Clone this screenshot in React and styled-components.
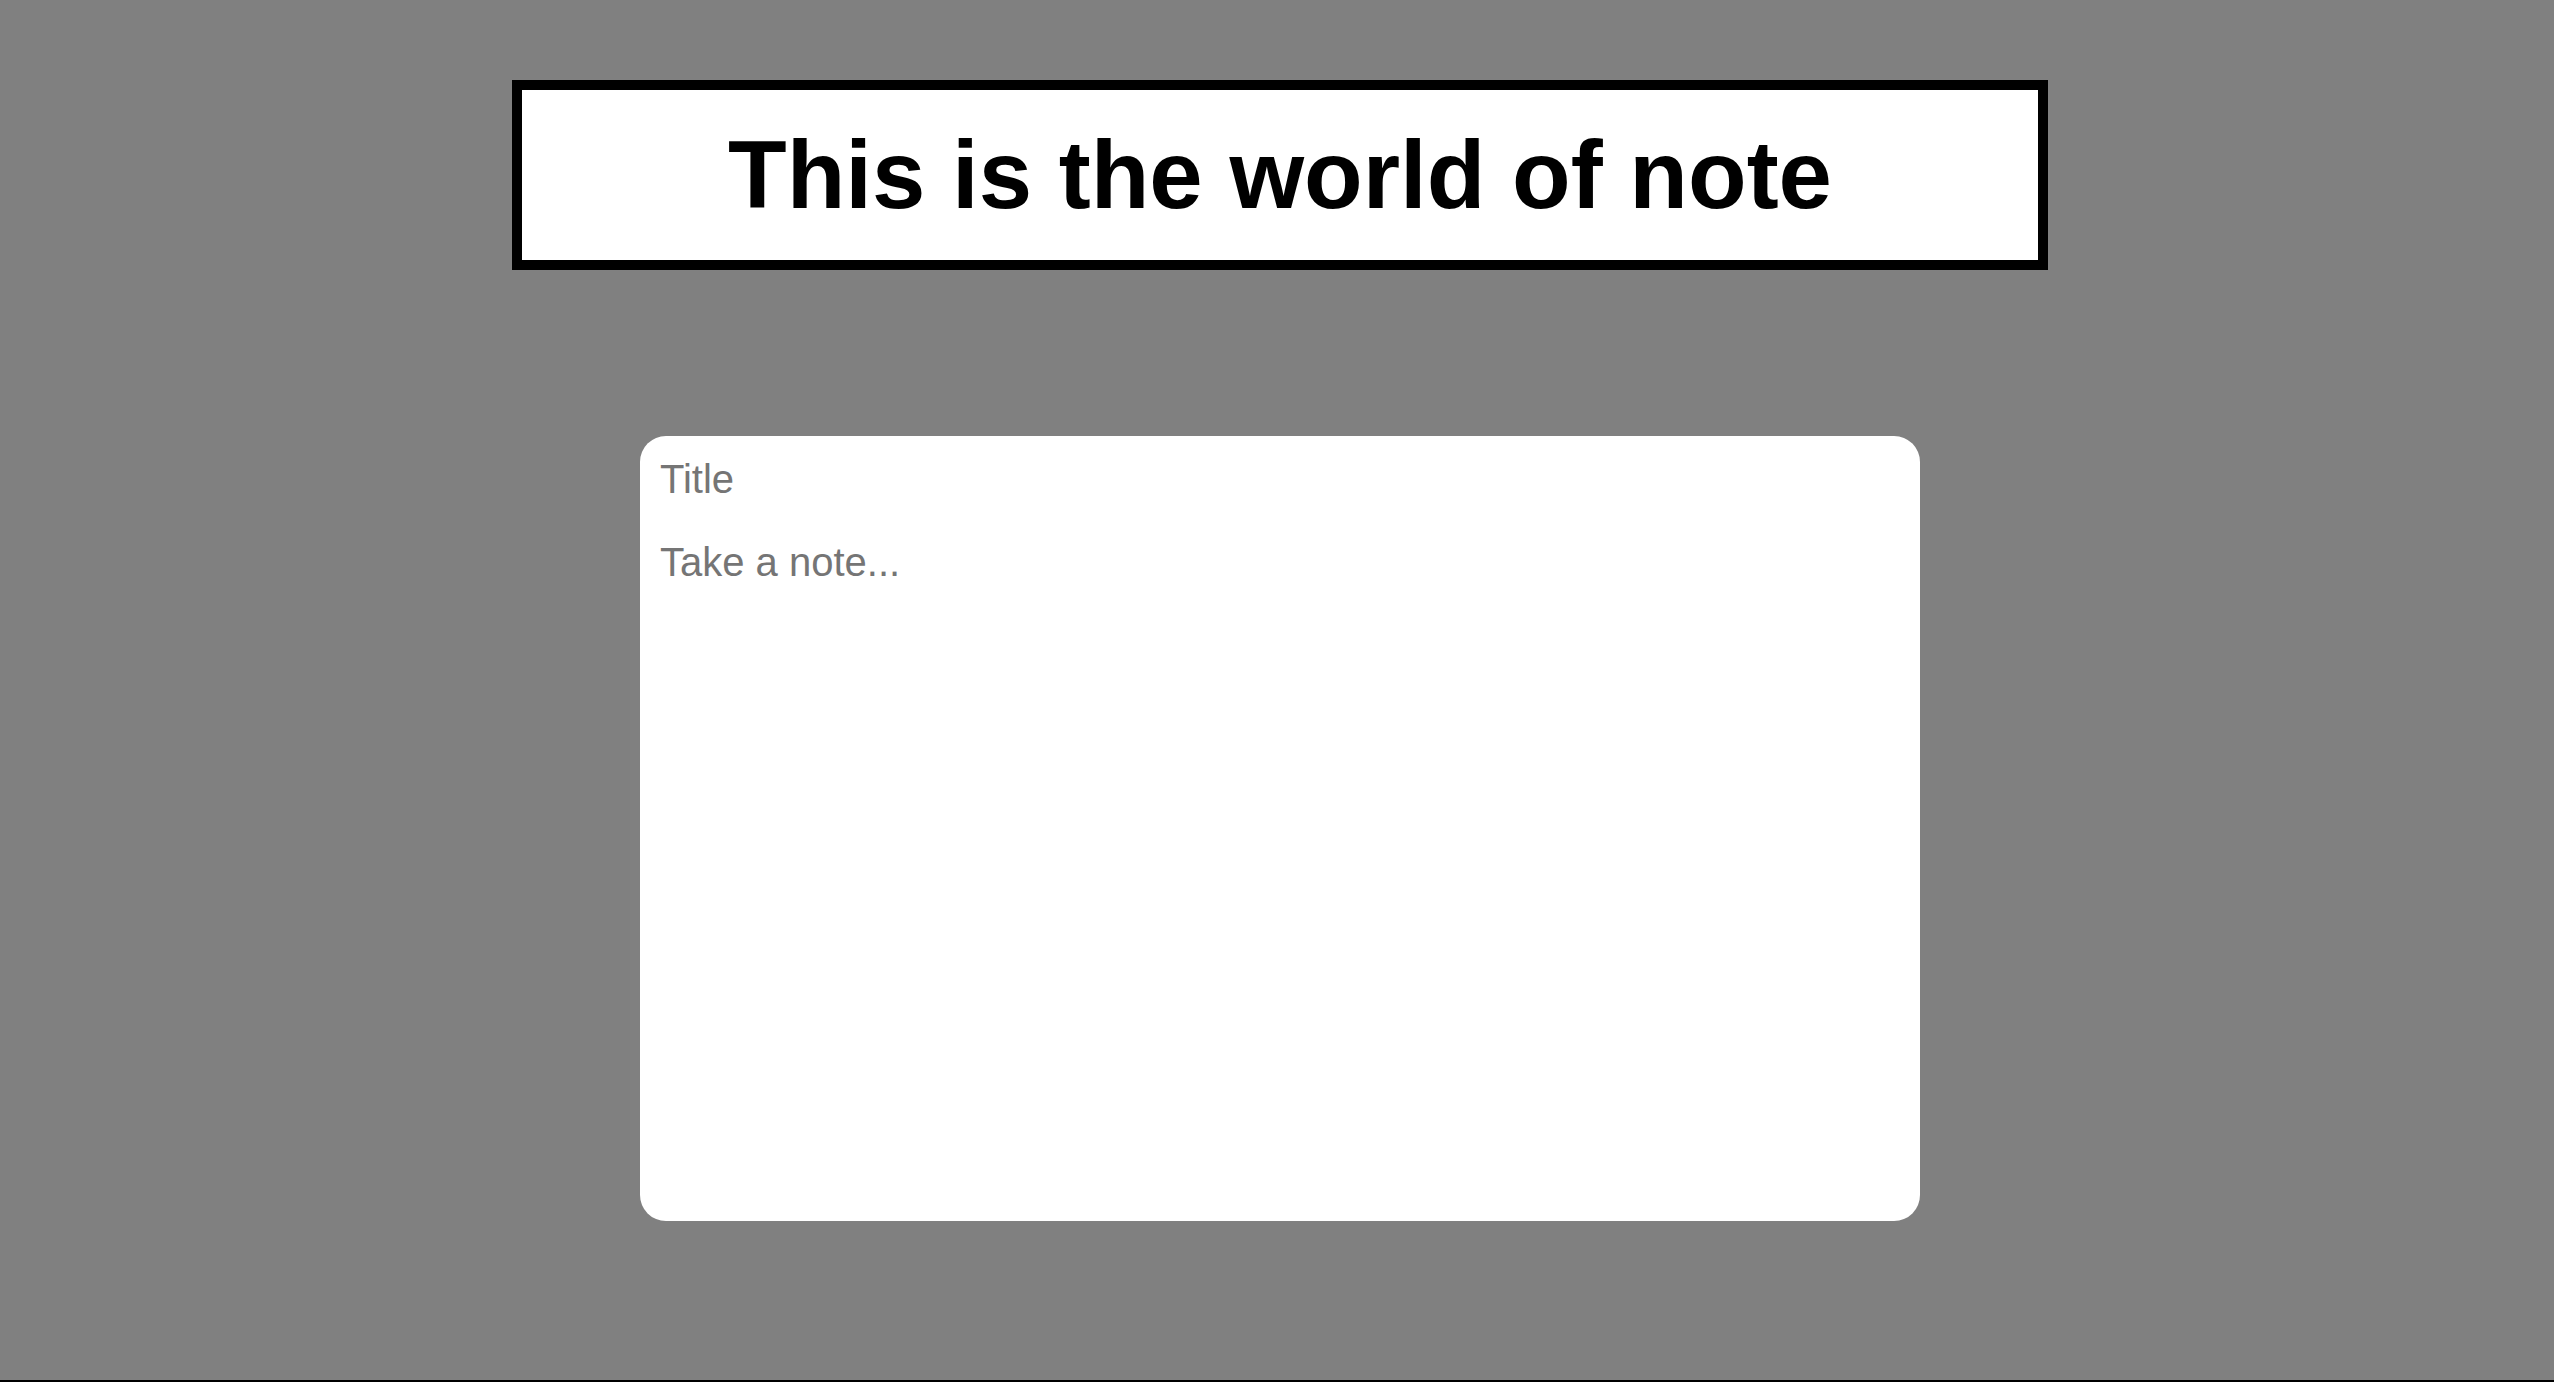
import React, { useState } from "react";
import styled, { createGlobalStyle } from "styled-components";

const GlobalStyle = createGlobalStyle`
  html, body {
    margin: 0;
    padding: 0;
    background: #808080;
    font-family: "Liberation Sans", Arial, sans-serif;
  }
  * {
    box-sizing: border-box;
  }
`;

const App = () => {
  const [title, setTitle] = useState("");
  const [note, setNote] = useState("");

  return (
    <Page>
      <GlobalStyle />
      <Header>
        <Heading>This is the world of note</Heading>
      </Header>
      <NoteCard>
        <TitleInput
          placeholder="Title"
          value={title}
          onChange={(e) => setTitle(e.target.value)}
        />
        <NoteArea
          placeholder="Take a note..."
          value={note}
          onChange={(e) => setNote(e.target.value)}
        />
      </NoteCard>
    </Page>
  );
};
export default App;

const Page = styled.div`
  min-height: 100vh;
  display: flex;
  flex-direction: column;
  align-items: flex-start;
  border-bottom: 2px solid #000;
`;

const Header = styled.header`
  width: 1536px;
  height: 190px;
  margin: 80px 0 0 512px;
  background: #fff;
  border: 10px solid #000;
  display: flex;
  justify-content: center;
  align-items: center;
`;

const Heading = styled.h1`
  margin: 0;
  font-size: 96px;
  font-weight: 700;
  color: #000;
  line-height: normal;
`;

const NoteCard = styled.div`
  width: 1280px;
  height: 785px;
  margin: 166px 0 0 640px;
  background: #fff;
  border-radius: 26px;
  padding: 20px;
  display: flex;
  flex-direction: column;
`;

const TitleInput = styled.input`
  border: none;
  outline: none;
  padding: 0;
  height: 46px;
  font-family: "Liberation Sans", Arial, sans-serif;
  font-size: 40px;
  color: #333;

  &::placeholder {
    color: #757575;
  }
`;

const NoteArea = styled.textarea`
  flex: 1;
  margin-top: 38px;
  border: none;
  outline: none;
  resize: none;
  padding: 0;
  font-family: "Liberation Sans", Arial, sans-serif;
  font-size: 40px;
  line-height: normal;
  color: #333;

  &::placeholder {
    color: #757575;
  }
`;
